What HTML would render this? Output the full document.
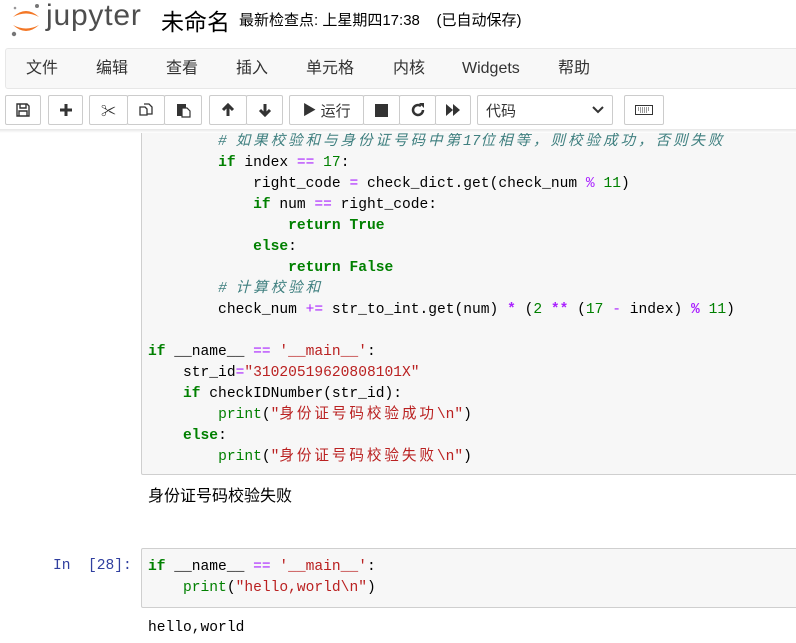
<!DOCTYPE html>
<html><head><meta charset="utf-8"><style>
*{box-sizing:border-box;margin:0;padding:0}
body{width:796px;height:643px;overflow:hidden;background:#fff;font-family:"Liberation Sans","Noto Sans CJK SC",sans-serif;position:relative}
.abs{position:absolute}
.menu{left:5px;top:48px;width:800px;height:41px;background:#f8f8f8;border:1px solid #e7e7e7;border-radius:3px;z-index:3}
.menu span{position:absolute;top:0;height:39px;line-height:39px;font-size:16px;color:#333}
.btn{position:absolute;top:95px;height:30px;border:1px solid #ccc;border-radius:2px;background:#fff;display:flex;align-items:center;justify-content:center;color:#333;font-size:15px;z-index:3}
.shadow{left:0;top:129px;width:796px;height:4px;background:linear-gradient(#e6e6e6,#fff)}
.cell{background:#f7f7f7;border:1px solid #cfcfcf;border-radius:2px;left:141px;width:670px}
pre{font-family:"Liberation Mono","Noto Sans CJK SC",monospace;font-size:14.6px;line-height:21px;color:#000;position:absolute}
.k{color:#008000;font-weight:bold}.o{color:#aa22ff}.n{color:#008000}.s{color:#ba2121}.c{color:#408080;font-style:italic}.b{color:#008000}
.w{letter-spacing:2.9px}
.out{font-family:"Liberation Sans","Noto Sans CJK SC",sans-serif;font-size:16px;color:#000}
</style></head><body>
<div class="abs cell" style="top:100px;height:375px"></div>
<div class="abs" style="left:0;top:88px;width:796px;height:42px;background:#fff;z-index:1"></div>
<div class="abs shadow" style="z-index:2"></div>
<svg class="abs" style="left:9px;top:3px" width="34" height="34" viewBox="0 0 34 34">
<path d="M4 14 Q17 2 30 14 Q17 7 4 14Z" fill="#f37726"/>
<path d="M4 22 Q17 34 30 22 Q17 29 4 22Z" fill="#f37726"/>
<circle cx="28" cy="3" r="2" fill="#767677"/><circle cx="5" cy="31" r="2.2" fill="#767677"/><circle cx="6" cy="5" r="1.3" fill="#989798"/>
</svg>
<div class="abs" style="left:46px;top:-1px;font-size:30px;color:#4e4e4e;letter-spacing:0.8px">jupyter</div>
<div class="abs" style="left:161px;top:3px;font-size:23px;color:#000">未命名</div>
<div class="abs" style="left:239px;top:9px;font-size:15px;color:#000">最新检查点: 上星期四17:38 &nbsp;&nbsp;&nbsp;(已自动保存)</div>
<div class="abs menu">
<span style="left:20px">文件</span><span style="left:90px">编辑</span><span style="left:160px">查看</span><span style="left:230px">插入</span><span style="left:300px">单元格</span><span style="left:387px">内核</span><span style="left:456px">Widgets</span><span style="left:552px">帮助</span>
</div>
<div class="btn" style="left:5px;width:36px"><svg width="14" height="14" viewBox="0 0 14 14"><path d="M1 1h10l2 2v10H1z M4 1v4h6V1 M3 8h8v5H3z" fill="none" stroke="#333" stroke-width="1.4"/></svg></div>
<div class="btn" style="left:48px;width:35px"><svg width="14" height="14"><path d="M7 1v12M1 7h12" stroke="#333" stroke-width="3"/></svg></div>
<div class="btn" style="left:89px;width:39px">✂</div>
<div class="btn" style="left:127px;width:38px"><svg width="15" height="15" viewBox="0 0 15 15"><path d="M1 4h5l2 2v6H1z M5 1h5l3 3v7H8" fill="#fff" stroke="#333" stroke-width="1.3"/></svg></div>
<div class="btn" style="left:164px;width:38px"><svg width="15" height="15" viewBox="0 0 15 15"><rect x="1" y="1" width="9" height="12" fill="#333"/><path d="M6 5h5l3 3v6H6z" fill="#fff" stroke="#333" stroke-width="1.2"/></svg></div>
<div class="btn" style="left:209px;width:38px"><svg width="14" height="14"><path d="M7 13V2M2 7l5-5 5 5" fill="none" stroke="#333" stroke-width="3"/></svg></div>
<div class="btn" style="left:246px;width:37px"><svg width="14" height="14"><path d="M7 1v11M2 7l5 5 5-5" fill="none" stroke="#333" stroke-width="3"/></svg></div>
<div class="btn" style="left:289px;width:75px"><span style="font-size:14px">▶</span>&nbsp;运行</div>
<div class="btn" style="left:363px;width:37px"><div style="width:13px;height:13px;background:#333"></div></div>
<div class="btn" style="left:399px;width:37px"><svg width="14" height="14"><path d="M12 7A5 5 0 1 1 10 3" fill="none" stroke="#333" stroke-width="2.5"/><path d="M8 0h5v5z" fill="#333"/></svg></div>
<div class="btn" style="left:435px;width:36px"><svg width="14" height="12"><path d="M0 0l7 6-7 6zM7 0l7 6-7 6z" fill="#333"/></svg></div>
<div class="btn" style="left:477px;width:136px;justify-content:space-between;padding:0 8px;font-size:15px"><span>代码</span><svg width="12" height="8"><path d="M1 1l5 5 5-5" fill="none" stroke="#333" stroke-width="2"/></svg></div>
<div class="btn" style="left:624px;width:40px"><svg width="18" height="10"><rect x="0.5" y="0.5" width="17" height="9" fill="none" stroke="#333"/><path d="M3 3h12M3 5h12M5 7h8" stroke="#333" stroke-width="1" stroke-dasharray="1 1"/></svg></div>
<pre style="left:148px;top:132px"><span class="c">        # <span class="w">如果校验和与身份证号码中第</span>17<span class="w">位相等，则校验成功，否则失败</span></span>
        <span class="k">if</span> index <span class="o">==</span> <span class="n">17</span>:
            right_code <span class="o">=</span> check_dict.get(check_num <span class="o">%</span> <span class="n">11</span>)
            <span class="k">if</span> num <span class="o">==</span> right_code:
                <span class="k">return</span> <span class="k">True</span>
            <span class="k">else</span>:
                <span class="k">return</span> <span class="k">False</span>
        <span class="c"># <span class="w">计算校验和</span></span>
        check_num <span class="o">+=</span> str_to_int.get(num) <span class="o"><b>*</b></span> (<span class="n">2</span> <span class="o"><b>**</b></span> (<span class="n">17</span> <span class="o">-</span> index) <span class="o"><b>%</b></span> <span class="n">11</span>)

<span class="k">if</span> __name__ <span class="o">==</span> <span class="s">'__main__'</span>:
    str_id<span class="o">=</span><span class="s">"31020519620808101X"</span>
    <span class="k">if</span> checkIDNumber(str_id):
        <span class="b">print</span>(<span class="s">"<span class="w">身份证号码校验成功</span>\n"</span>)
    <span class="k">else</span>:
        <span class="b">print</span>(<span class="s">"<span class="w">身份证号码校验失败</span>\n"</span>)</pre>
<div class="abs out" style="left:148px;top:482px">身份证号码校验失败</div>
<div class="abs" style="left:53px;top:558px;font-family:'Liberation Mono',monospace;font-size:14.6px;color:#303f9f">In&nbsp;&nbsp;[28]:</div>
<div class="abs cell" style="top:548px;height:60px"></div>
<pre style="left:148px;top:557px"><span class="k">if</span> __name__ <span class="o">==</span> <span class="s">'__main__'</span>:
    <span class="b">print</span>(<span class="s">"hello,world\n"</span>)</pre>
<pre style="left:148px;top:618px">hello,world</pre>
</body></html>
